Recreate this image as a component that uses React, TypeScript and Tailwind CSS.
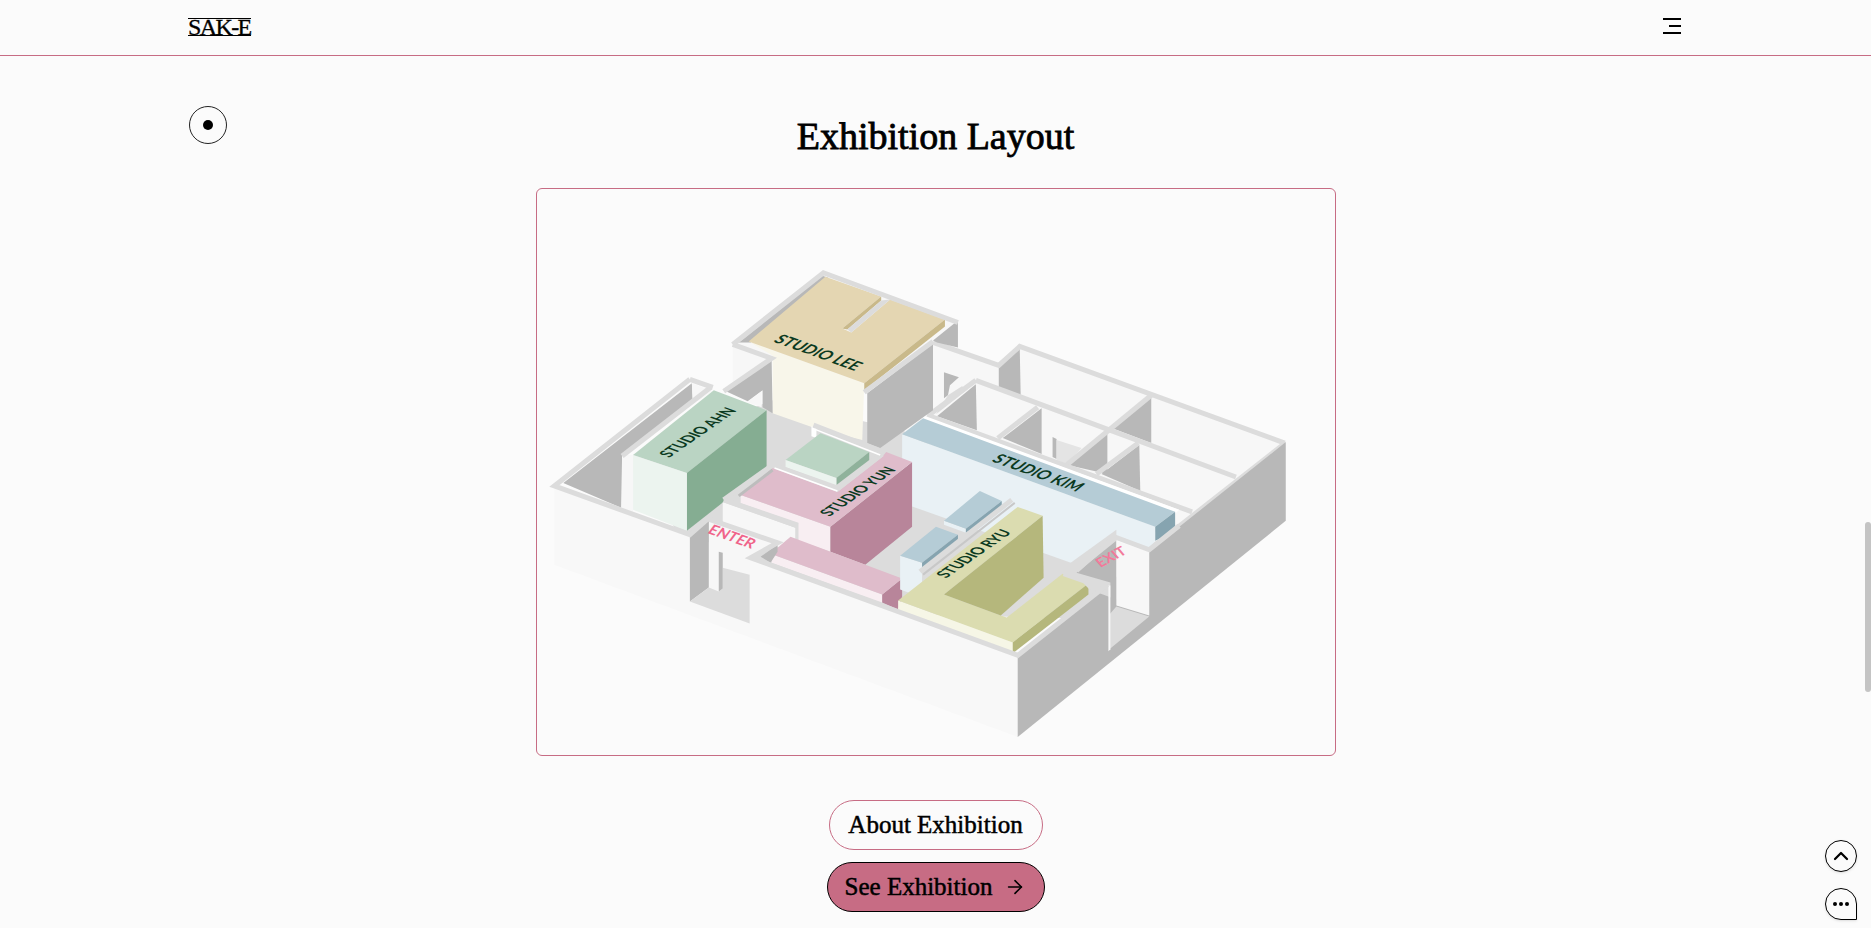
import { ArrowRight, ChevronUp } from "lucide-react";

const WALL = "#f7f7f7";
const DARK = "#b8b8b8";
const BAND = "#dcdcdc";

type Shape = [string, string];

// everything behind the studios, back to front
const backShapes: Shape[] = [
  [WALL, "1020,344 1287,442 1150,552 1117,540 902,434 933,342 999,364"],
  [DARK, "999,363 1020,346 1021,396 999,387"],
  [DARK, "944,372 959,377 950,385 948,395 944,398"],
  [BAND, "948,395 962,386 968,389 936,414"],
  [DARK, "937,416 976,384 977,430"],
  [DARK, "1003,438 1042,408 1042,454"],
  [DARK, "1113,428 1152,397 1152,443"],
  [DARK, "1068,465 1108,433 1108,474"],
  [DARK, "1102,474 1140,445 1141,491"],
  [DARK, "1053,437 1057,439 1057,459 1053,457"],
  ["#e4e4e4", "1057,440 1082,448 1067,465 1057,460"],
];

const backBands: string[] = [
  "933,342 999,365 1020,346 1286,443",
  "976,380 1237,477",
  "930,414 976,380",
  "998,438 1038,407",
  "1097,474 1139,443",
  "1067,465 1152,395",
  "927,415 1193,512",
  "1150,550 1285,444",
];

const studioShapes: Shape[] = [
  // floor
  [BAND, "632,455 772,400 902,430 1117,540 1120,620 720,610"],
  // kim
  ["#e9f1f5", "902,434 1156,527 1156,541 1150,550 1117,536 1077,565 902,503"],
  ["#ffffff", "923,415 1180,510 1176,514 921,420"],
  ["#b5ccd6", "902,434 923,418 1176,512 1156,527"],
  ["#86a4b0", "1176,512 1176,532 1156,541 1156,527"],
  // lee
  [WALL, "732,344 823,272 958,322 864,392"],
  [DARK, "933,340 958,320 958,347 937,342"],
  [DARK, "867,393 933,343 933,410 880,448 867,443"],
  ["#f8f6ea", "748,341 864,383 862,440 812,427 772,413 772,355"],
  [DARK, "738,342 822,275 828,277 750,342"],
  ["#e4d6b2", "748,341 825,276 881,296 842,328 851,332 890,299 945,319 864,383"],
  ["#c9b98a", "864,383 945,319 945,326 864,390"],
  ["#c9b98a", "842,328 881,296 881,300 847,329"],
  [BAND, "847,329 881,300 890,299 851,332"],
  // wall left of lee
  [WALL, "732,345 771,358 724,390 732,385"],
  [DARK, "723,390 771,356 772,413 762,407 762,390 747,401"],
  [WALL, "747,402 761,391 761,407"],
  // left room
  [DARK, "562,483 691,383 692,402 621,455 620,508"],
  [WALL, "691,383 712,391 692,404"],
  [WALL, "621,455 632,455 632,512 621,508"],
  // small green block
  ["#ffffff", "811,426 816,428 816,438 811,436"],
  ["#bad4c3", "785,460 820,433 869,452 836,478"],
  ["#8fb29b", "836,478 869,452 869,460 836,485"],
  ["#ecf4ef", "785,460 836,478 836,485 785,467"],
  // ahn
  ["#bad4c3", "632,455 713,390 766,410 686,473"],
  ["#85ad92", "686,473 766,410 766,468 686,531"],
  ["#ecf4ef", "632,455 686,473 686,531 632,510"],
  // panel in front of yun
  [WALL, "722,502 795,528 795,552 722,532"],
  [BAND, "795,526 798,524 798,540 795,540"],
  // yun
  ["#f8eef2", "740,495 830,527 830,552 798,541 798,523 740,503"],
  ["#b8859a", "830,527 912,462 912,527 865,565 830,552"],
  ["#dfbccb", "740,495 772,468 837,492 882,457 886,452 912,462 830,527"],
  // low pink block
  ["#f8eef2", "770,554 882,595 882,603 771,563"],
  ["#b8859a", "882,595 902,579 902,597 898,610 882,603"],
  ["#dfbccb", "770,554 790,537 902,579 882,595"],
  // blue blocks
  ["#e9f1f5", "900,556 922,563 922,598 900,590"],
  ["#e9f1f5", "944,521 966,529 966,533 944,525"],
  ["#b5ccd6", "944,521 980,491 1002,501 966,529"],
  ["#86a4b0", "966,529 1002,501 1002,508 966,533"],
  ["#b5ccd6", "900,556 936,527 958,535 922,563"],
  ["#86a4b0", "922,563 958,535 958,542 922,568"],
  // ryu
  ["#f6f6e6", "898,601 1013,643 1013,654 898,612"],
  ["#dbdcb0", "898,601 1018,507 1043,516 944,595 1001,616 1007,618 1063,574 1089,584 1013,643"],
  ["#b5b77c", "944,595 1043,516 1044,578 1001,616"],
  ["#b5b77c", "1013,643 1089,584 1089,595 1013,654"],
];

const midBands: string[] = [
  "732,344 823,272 958,322",
  "732,344 771,358 723,391",
  "864,392 933,341",
  "621,456 710,387",
  "723,500 772,465 837,489 882,454",
  "723,500 797,526",
  "813,425 883,452",
  "920,572 1012,500",
  "1064,574 1110,590",
];

const frontShapes: Shape[] = [
  ["#f8f8f8", "553,486 1018,656 1018,738 553,565"],
  [DARK, "1018,656 1287,442 1287,521 1018,738"],
  // entrance notch
  [WALL, "708,521 777,543 750,558 750,575 722,568 722,553 718,552 718,592 708,588"],
  [DARK, "760,557 777,545 777,552 770,563"],
  [DARK, "689,535 708,520 708,588 689,602"],
  [BAND, "689,602 708,588 718,592 722,589 722,568 749,575 749,624"],
  [DARK, "718,552 722,553 722,589 718,592"],
  // exit notch
  [BAND, "1067,566 1117,530 1117,600 1090,590"],
  [DARK, "1077,573 1117,541 1117,607 1111,612 1111,583"],
  [WALL, "1117,541 1150,552 1150,616 1117,606"],
  [BAND, "1117,607 1150,617 1110,650 1110,615"],
  [WALL, "1109,586 1111,586 1111,650 1109,652"],
];

const frontBands: string[] = [
  "689,379 553,486 689,535 707,519 777,543 750,558 1018,656 1108,585",
  "689,379 712,387",
  "1077,571 1115,537 1150,550 1180,526",
];

const labels = [
  { text: "STUDIO LEE", m: "matrix(.97 .35 -.9 .72 772 341)", size: "15" },
  { text: "STUDIO AHN", m: "matrix(.82 -.57 1.15 .42 668 458)", size: "13.5" },
  { text: "STUDIO KIM", m: "matrix(.97 .35 -.9 .72 991 461)", size: "15" },
  { text: "STUDIO YUN", m: "matrix(.82 -.57 1.15 .42 829 517)", size: "13.5" },
  { text: "STUDIO RYU", m: "matrix(.82 -.57 1.15 .42 946 579)", size: "13.5" },
];

function FloorPlan() {
  return (
    <svg viewBox="536 188 800 568" className="block h-full w-full">
      {backShapes.map(([fill, points]) => (
        <polygon key={points} fill={fill} points={points} />
      ))}
      {backBands.map((points) => (
        <polyline key={points} fill="none" stroke={BAND} strokeWidth="5" points={points} />
      ))}
      {studioShapes.map(([fill, points]) => (
        <polygon key={points} fill={fill} points={points} />
      ))}
      {midBands.map((points) => (
        <polyline key={points} fill="none" stroke={BAND} strokeWidth="5" points={points} />
      ))}
      <polyline fill="none" stroke="#ffffff" strokeWidth="1.5" points="814,429 880,455" />
      <polyline fill="none" stroke="#ffffff" strokeWidth="1.5" points="774,468 837,491" />
      <polyline fill="none" stroke="#bdbdbd" strokeWidth="3" points="738,496 772,470" />
      <polyline fill="none" stroke="#c8c8c8" strokeWidth="2" points="923,575 1015,503" />
      {frontShapes.map(([fill, points]) => (
        <polygon key={points} fill={fill} points={points} />
      ))}
      {frontBands.map((points) => (
        <polyline key={points} fill="none" stroke={BAND} strokeWidth="5" points={points} />
      ))}
      {labels.map((label) => (
        <text
          key={label.text}
          transform={label.m}
          fill="#0b3a1f"
          fontFamily="Lato, sans-serif"
          fontSize={label.size}
          fontWeight="700"
        >
          {label.text}
        </text>
      ))}
      <text
        transform="matrix(.94 .34 -.6 .8 706 533)"
        fill="#f0648a"
        fontFamily="Lato, sans-serif"
        fontSize="15"
        fontWeight="700"
      >
        ENTER
      </text>
      <text
        transform="matrix(.85 -.45 .6 .7 1101 568)"
        fill="#f27a9a"
        fontFamily="Lato, sans-serif"
        fontSize="15"
        fontWeight="700"
      >
        EXIT
      </text>
    </svg>
  );
}

export default function App() {
  return (
    <div className="h-screen overflow-hidden bg-[#fbfbfb] font-['Liberation_Serif',serif] text-black">
      <header className="flex h-[56px] items-start justify-between border-b border-[#c76c84] pl-[188px] pr-[190px]">
        <a className="mt-[18px] flex h-[18px] items-center border-y border-black text-[24px] leading-none tracking-[-1.6px] [-webkit-text-stroke:0.3px_black]">
          SAK-E
        </a>
        <button type="button" className="mt-[18px] flex w-[18px] flex-col items-end gap-[5px]">
          <span className="h-[2px] w-full bg-black" />
          <span className="h-[2px] w-[12px] bg-black" />
          <span className="h-[2px] w-full bg-black" />
        </button>
      </header>

      <main className="px-[188px]">
        <div className="grid grid-cols-[1fr_auto_1fr] pt-[50px]">
          <div className="ml-[1px] flex h-[38px] w-[38px] items-center justify-center rounded-full border border-[#222]">
            <span className="h-[10px] w-[10px] rounded-full bg-black" />
          </div>
          <h1 className="mt-[6px] text-[38px] leading-[48px] font-normal [-webkit-text-stroke:0.8px_black]">
            Exhibition Layout
          </h1>
        </div>

        <div className="mx-auto mt-[28px] h-[568px] w-[800px] overflow-hidden rounded-md border border-[#c76c84]">
          <FloorPlan />
        </div>

        <div className="mt-[44px] flex flex-col items-center gap-[12px] text-[25px]">
          <a className="flex h-[50px] w-[214px] items-center justify-center rounded-full border border-[#c76c84] [-webkit-text-stroke:0.5px_black]">
            About Exhibition
          </a>
          <a className="flex h-[50px] w-[218px] items-center justify-center gap-[12px] rounded-full border border-black bg-[#c76c84] [-webkit-text-stroke:0.5px_black]">
            See Exhibition
            <ArrowRight className="h-[22px] w-[22px]" strokeWidth={1.75} />
          </a>
        </div>
      </main>

      <div className="fixed right-0 top-[522px] h-[170px] w-[6px] rounded-full bg-[#c4c4c4]" />
      <button
        type="button"
        className="fixed left-[1825px] top-[840px] flex h-[32px] w-[32px] items-center justify-center rounded-full border border-black bg-[#fbfbfb] shadow-sm"
      >
        <ChevronUp className="h-[24px] w-[24px]" strokeWidth={2.25} />
      </button>
      <button
        type="button"
        className="fixed left-[1825px] top-[888px] flex h-[32px] w-[32px] items-center justify-center gap-[2px] rounded-t-full rounded-bl-full border border-black bg-[#fbfbfb] shadow-sm"
      >
        <span className="h-[4px] w-[4px] rounded-full bg-black" />
        <span className="h-[4px] w-[4px] rounded-full bg-black" />
        <span className="h-[4px] w-[4px] rounded-full bg-black" />
      </button>
    </div>
  );
}
